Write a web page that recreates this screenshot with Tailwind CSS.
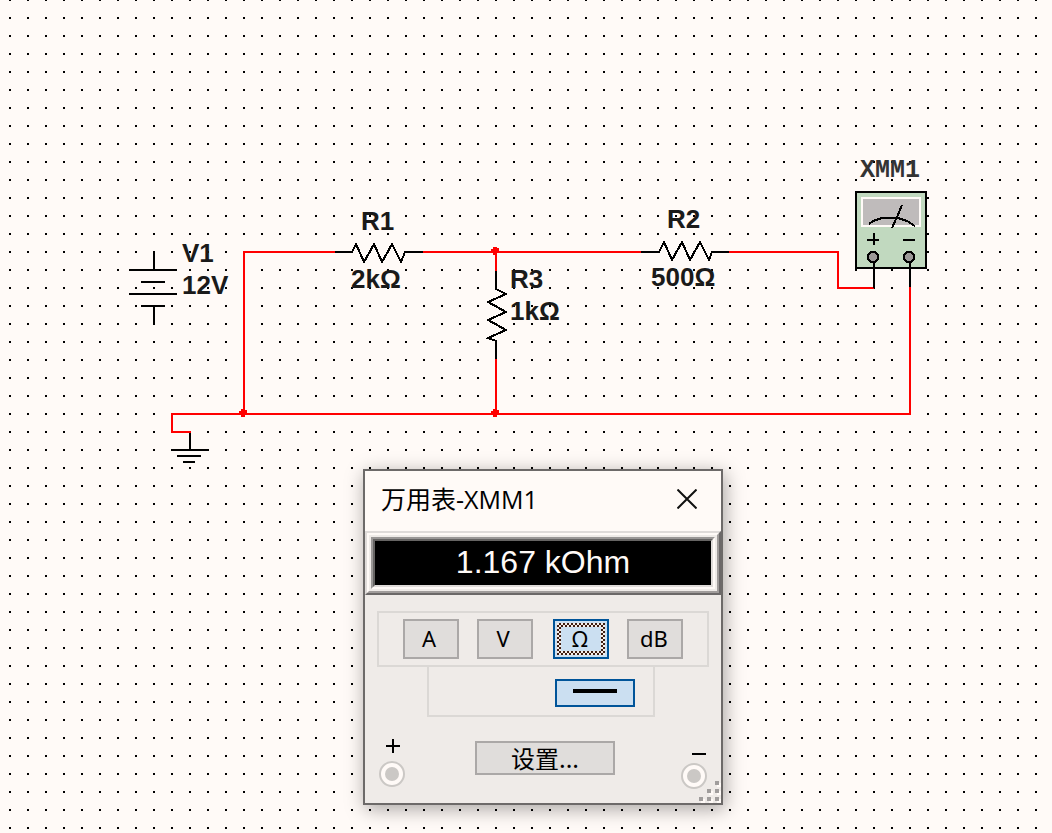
<!DOCTYPE html>
<html lang="zh-CN">
<head>
<meta charset="utf-8">
<title>万用表-XMM1</title>
<script src="https://cdn.jsdelivr.net/npm/@tailwindcss/browser@4"></script>
</head>
<body class="bg-[#fffaf7] font-['Noto_Sans','Noto_Sans_CJK_SC',sans-serif] text-black">
<main class="relative min-h-screen overflow-hidden">
  <svg class="absolute inset-0 h-full w-full" shape-rendering="crispEdges" role="img" aria-label="Circuit schematic">
    <defs>
      <pattern id="grid" x="9" y="-1" width="18" height="18" patternUnits="userSpaceOnUse"><rect width="2" height="2"/></pattern>
      <path id="node" d="M-2 -4H2V-3H4V2H2V4H-2V2H-4V-2H-2Z"/>
    </defs>
    <rect width="100%" height="100%" fill="url(#grid)"/>

    <!-- wires -->
    <g fill="none" stroke="#ff0000" stroke-width="2">
      <path d="M335 252H244V414"/>
      <path d="M423 252H641M729 252H838V288H874"/>
      <path d="M496 252V271M496 359V414"/>
      <path d="M910 287V414H172V432H191"/>
    </g>
    <g fill="#ff0000">
      <use href="#node" x="495" y="251"/><use href="#node" x="243" y="413"/><use href="#node" x="495" y="413"/>
    </g>

    <g fill="none" stroke="#000" stroke-width="2">
      <!-- battery and ground -->
      <path d="M154 251V270M129 270H177M141 282H165M129 294H177M141 306H165M154 306V325"/>
      <path d="M190 433V450M171 450H209M177 456H201M183 462H195"/>
      <!-- resistors -->
      <path d="M335 252H352L356 244L364 262L374 244L382 262L392 244L401 262L405 252H423"/>
      <path d="M641 252H659L664 242L672 260L682 242L690 260L700 242L709 260L712 252H729"/>
      <path d="M496 271V289L506 294L488 302L506 312L488 320L506 330L488 338L496 341V359"/>
    </g>

    <!-- multimeter symbol -->
    <rect x="856" y="192" width="70" height="76" fill="#c1d9bf" stroke="#000" stroke-width="2"/>
    <rect x="862" y="198" width="58" height="28" fill="#bfbbbb" stroke="#fffaf7" stroke-width="2"/>
    <g fill="none" stroke="#000" stroke-width="2">
      <path d="M869 224L873 221L882 218H898L907 221L915 226M902 205L897 217L892 228"/>
      <path d="M867 240H879M874 233V245M903 240H915"/>
      <path d="M874 257V288M910 257V287"/>
      <path fill="#9b9897" d="M871 252H875L878 255V259L875 262H871L868 259V255ZM907 252H911L914 255V259L911 262H907L904 259V255Z"/>
    </g>

    <g class="font-['Liberation_Sans',sans-serif] text-[26px] font-bold" fill="#1a1a1a">
      <text x="182" y="262">V1</text>
      <text x="182" y="294">12V</text>
      <text x="361" y="230">R1</text>
      <text x="351" y="288">2kΩ</text>
      <text x="510" y="288">R3</text>
      <text x="510" y="320">1kΩ</text>
      <text x="667" y="228">R2</text>
      <text x="651" y="286">500Ω</text>
    </g>
    <text x="860" y="177" class="font-['Liberation_Mono',monospace] text-[25px] font-bold" fill="#333">XMM1</text>
  </svg>

  <!-- instrument window -->
  <section class="absolute left-[363px] top-[469px] w-[360px] border-2 border-[#6d6a69] bg-[#efebe8] shadow-[2px_4px_18px_rgba(0,0,0,0.35)]">
    <header class="flex h-15 items-center justify-between bg-[#fffaf7] pb-1 pl-4 pr-[22px]">
      <h1 class="text-[25px] leading-8 font-['Open_Sans','Noto_Sans_CJK_SC',sans-serif]">万用表-XMM1</h1>
      <button type="button" aria-label="关闭" class="flex size-6 items-center justify-center">
        <svg class="size-5" viewBox="0 0 20 20" stroke="#111" stroke-width="2" fill="none"><path d="M.5 .5L19.5 19.5M19.5 .5L.5 19.5"/></svg>
      </button>
    </header>

    <div class="border-2 border-b-[#6b6868] border-l-[#dfdbd9] border-r-[#6b6868] border-t-[#dfdbd9]">
      <div class="border-2 border-b-[#a09c9b] border-l-[#fffaf7] border-r-[#a09c9b] border-t-[#fffaf7] p-0.5">
        <div class="border-2 border-b-[#fffaf7] border-l-[#9a9796] border-r-[#fffaf7] border-t-[#9a9796]">
          <div class="border-2 border-b-[#dfdbd9] border-l-[#666463] border-r-[#dfdbd9] border-t-[#666463]">
            <output class="block h-11 bg-black text-center font-['Liberation_Sans',sans-serif] text-[32px] leading-[42px] text-[#fffaf7]">1.167 kOhm</output>
          </div>
        </div>
      </div>
    </div>

    <div class="px-3 pt-4">
      <div class="flex border-2 border-[#dbd8d5] py-1.5 pl-6 text-[22px] leading-[34px]">
        <button type="button" class="h-10 w-14 border-2 border-[#aba8a7] bg-[#e0dddb] pr-1 pb-0.5">A</button>
        <button type="button" class="ml-[18px] h-10 w-14 border-2 border-[#aba8a7] bg-[#e0dddb] pr-1 pb-0.5">V</button>
        <button type="button" aria-pressed="true" class="ml-5 h-10 w-14 border-2 border-[#005499] bg-[#cbdff1] p-0.5">
          <span class="block h-8 bg-[repeating-conic-gradient(#3d1d12_0_25%,#f4ece8_0_50%)] bg-[size:4px_4px] p-1"><span class="block h-6 bg-[#cbdff1] pr-0.5 leading-[22px]">Ω</span></span>
        </button>
        <button type="button" class="ml-[18px] h-10 w-14 border-2 border-[#aba8a7] bg-[#e0dddb] pr-0.5 pb-0.5">dB</button>
      </div>
      <div class="ml-[50px] mr-[54px] flex justify-end border-2 border-t-0 border-[#dbd8d5] pb-2 pr-[18px] pt-3">
        <button type="button" aria-label="直流" aria-pressed="true" class="flex h-7 w-20 justify-center border-2 border-[#005499] bg-[#cbdff1] pt-2"><span class="h-1 w-11 bg-black"></span></button>
      </div>
    </div>

    <footer class="grid h-[86px] grid-cols-[28px_1fr_26px] items-start px-3.5 pt-[22px]">
      <div class="flex w-[26px] flex-col items-center">
        <svg class="h-[22px] w-[26px]" shape-rendering="crispEdges" role="img" aria-label="+"><path d="M7 7H21M14 0V14" stroke="#000" stroke-width="2"/></svg>
        <svg class="size-[26px]" viewBox="0 0 26 26"><circle cx="13" cy="13" r="12" fill="#fffaf7" stroke="#cbc8c5" stroke-width="2"/><circle cx="13" cy="13" r="7" fill="#cbc8c5"/></svg>
      </div>
      <button type="button" class="ml-0.5 mt-0.5 h-[34px] w-[140px] justify-self-center border-2 border-[#aba8a7] bg-[#e0dddb] text-2xl leading-[30px] font-['Noto_Sans_CJK_SC',sans-serif]">设置...</button>
      <div class="flex flex-col items-center">
        <svg class="h-6 w-[26px]" shape-rendering="crispEdges" role="img" aria-label="−"><path d="M11 15H25" stroke="#000" stroke-width="2"/></svg>
        <svg class="size-[26px]" viewBox="0 0 26 26"><circle cx="13" cy="13" r="12" fill="#fffaf7" stroke="#cbc8c5" stroke-width="2"/><circle cx="13" cy="13" r="7" fill="#cbc8c5"/></svg>
      </div>
    </footer>
    <svg class="absolute bottom-0 right-0 size-[22px]" viewBox="0 0 22 22" shape-rendering="crispEdges" aria-hidden="true">
      <path fill="#fffaf7" d="M18 2h4v4h-4zM10 10h4v4h-4zM18 10h4v4h-4zM2 18h4v4h-4zM10 18h4v4h-4zM18 18h4v4h-4z"/>
      <path fill="#a09d9c" d="M16 0h4v4h-4zM8 8h4v4h-4zM16 8h4v4h-4zM0 16h4v4h-4zM8 16h4v4h-4zM16 16h4v4h-4z"/>
    </svg>
  </section>
</main>
</body>
</html>
